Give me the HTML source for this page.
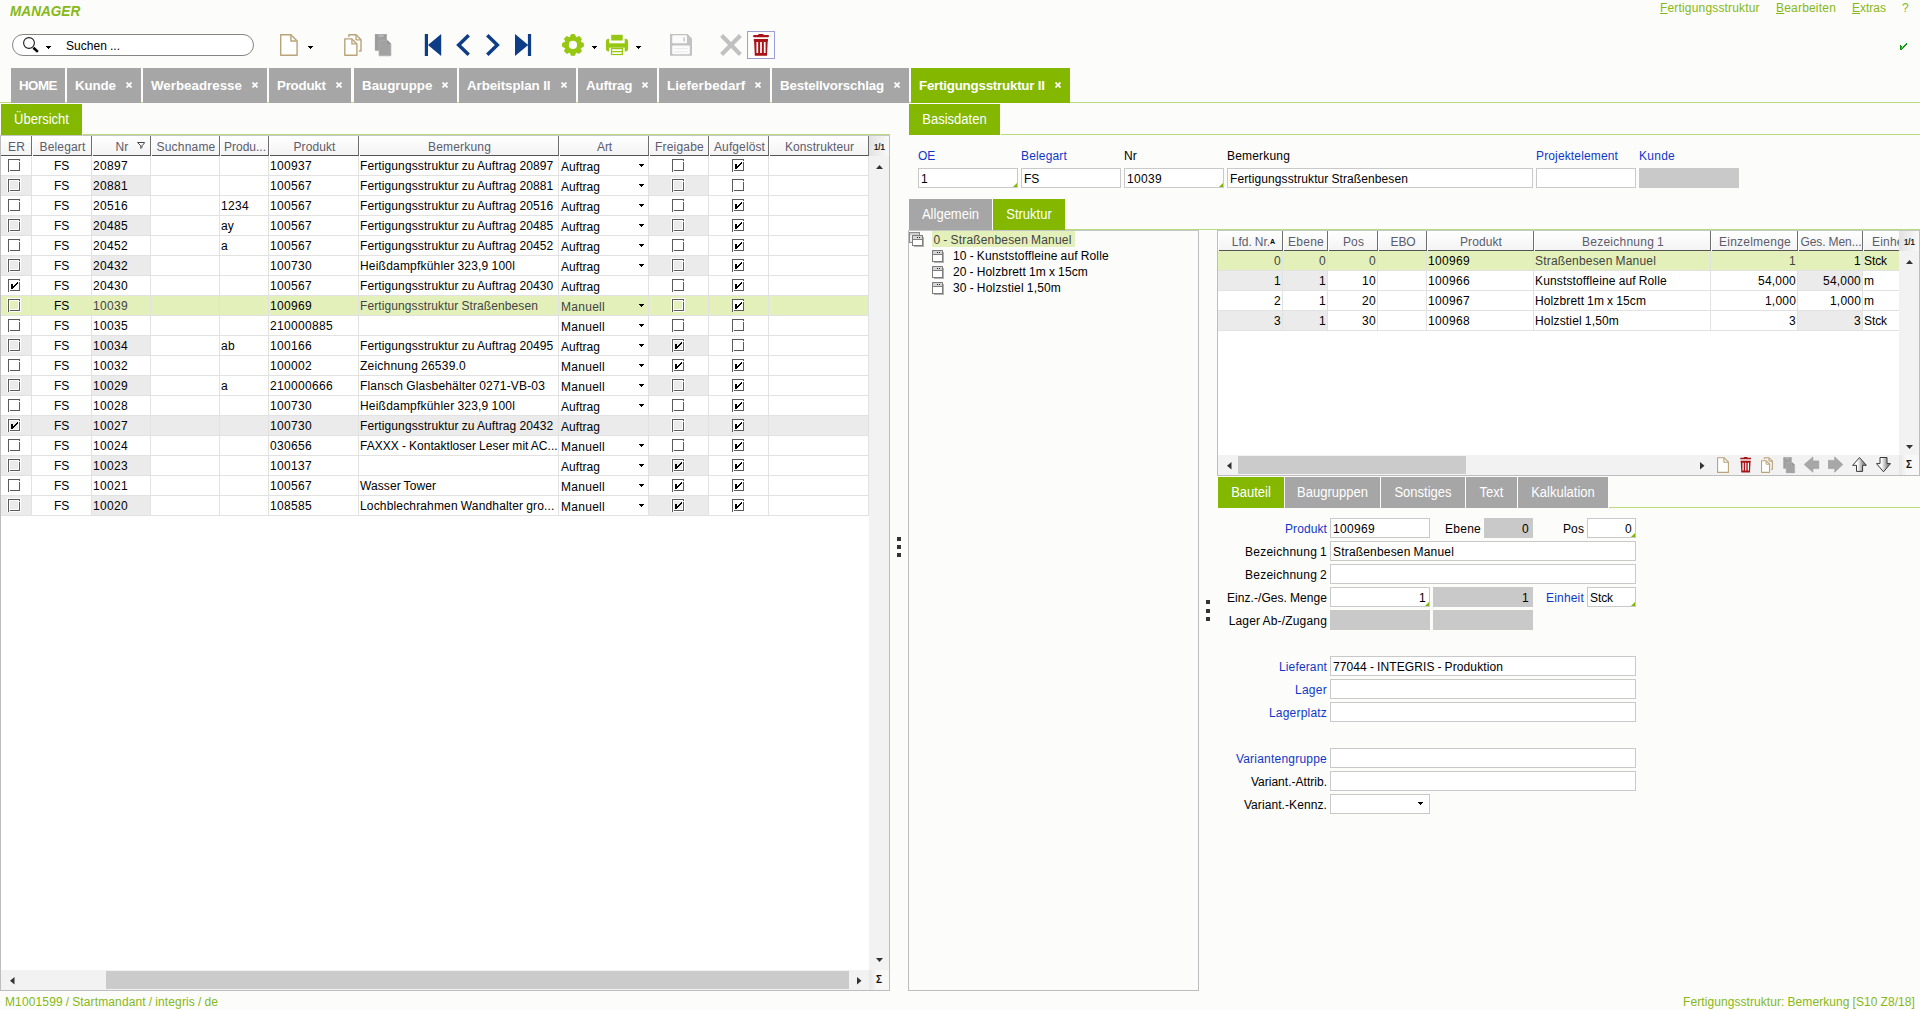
<!DOCTYPE html>
<html lang="de"><head><meta charset="utf-8"><title>MANAGER</title>
<style>
html,body{margin:0;padding:0;}
body{width:1920px;height:1010px;overflow:hidden;position:relative;background:#fcfcfa;
 font-family:"Liberation Sans",sans-serif;font-size:12px;color:#000;}
div,svg.a{position:absolute;box-sizing:border-box;}
.t{white-space:nowrap;line-height:14px;height:14px;}
.h{white-space:nowrap;line-height:14px;color:#5c5c6c;text-align:center;overflow:hidden;
 background:linear-gradient(#ffffff,#f3f3f3);border-right:1px solid #6e6e6e;border-bottom:1px solid #555;padding:4px 0 0 1px;}
.c{white-space:nowrap;line-height:14px;overflow:hidden;padding:3px 0 0 1px;}
.cb{border:1px solid #5a5a5a;}
.ck{position:absolute;left:2px;top:2px;}
.cb:before{content:"";position:absolute;left:-1px;top:11px;width:1px;height:1px;background:#5a5a5a;box-shadow:1px -1px 0 0 var(--f),11px -10px 0 0 var(--f);}
.tab{color:#fff;font-weight:bold;font-size:13.33px;line-height:16px;white-space:nowrap;background:#a6a6a6;
 padding:10px 0 0 8px;}
.tab i{position:absolute;right:9px;top:14px;width:6px;height:6px;}
.st b{display:inline-block;font-weight:normal;transform:scaleY(1.08);transform-origin:50% 78%;}
.st{color:#fff;font-size:13px;line-height:16px;white-space:nowrap;text-align:center;padding-top:8px;}
.in{background:#fff;border:1px solid #c9c9c9;line-height:14px;padding:3px 0 0 2px;white-space:nowrap;overflow:hidden;}
.ro{background:#c9c9c9;line-height:14px;padding:4px 4px 0 0;text-align:right;white-space:nowrap;}
.lb{white-space:nowrap;line-height:14px;height:14px;text-align:right;}
.bl{color:#1038c8;}
.g{color:#86b817;}
.cor:after{content:"";position:absolute;right:0;bottom:0;border-style:solid;border-width:0 0 4px 4px;border-color:transparent transparent #7ab800 transparent;}
</style></head><body>

<div class="t" style="left:10px;top:4px;transform:scaleY(1.1);transform-origin:0 12.5px;font-weight:bold;font-style:italic;font-size:13.6px;line-height:16px;height:16px;color:#86b817;">MANAGER</div>
<div class="t g" style="left:1660px;top:1px;letter-spacing:.17px;"><u>F</u>ertigungsstruktur</div>
<div class="t g" style="left:1776px;top:1px;letter-spacing:0.196px;"><u>B</u>earbeiten</div>
<div class="t g" style="left:1852px;top:1px;"><u>E</u>xtras</div>
<div class="t g" style="left:1902px;top:1px;letter-spacing:0.326px;">?</div>
<svg class="a" style="left:1900px;top:43px" width="7" height="7" viewBox="0 0 7 7" shape-rendering="crispEdges"><path d="M6 0h1v1h-1zM5 1h2v1h-2zM0 2h1v1h-1zM4 2h2v1h-2zM0 3h2v1h-2zM3 3h2v1h-2zM0 4h4v1h-4zM0 5h3v1h-3zM0 6h2v1h-2z" fill="#0b930b"/><path d="M1 4h1v2h-1zM2 4h1v1h-1z" fill="#22d022"/></svg>
<div style="left:12px;top:34px;width:242px;height:22px;border:1px solid #858585;border-radius:11px;background:#fff;"></div>
<svg class="a" style="left:22px;top:36px" width="18" height="18" viewBox="0 0 18 18" ><circle cx="7" cy="7" r="5.400" fill="none" stroke="#1c1c1c" stroke-width="1.1"/><path d="M11.400 11.800 L15.900 15.900" stroke="#000" stroke-width="2.600"/></svg>
<svg class="a" style="left:46px;top:46px" width="5" height="3" viewBox="0 0 5 3" shape-rendering="crispEdges"><path d="M0 0h5v1h-5zM1 1h3v1h-3zM2 2h1v1h-1z" fill="#000"/></svg>
<div class="t" style="left:66px;top:39px;letter-spacing:0.033px;word-spacing:-0.367px;">Suchen ...</div>
<svg class="a" style="left:279px;top:34px" width="20" height="23" viewBox="0 0 20 23" ><path d="M1.700 0.800h10.200l6.200 6.200v14.300h-16.400z" fill="#fff" stroke="#b9a378" stroke-width="1.400" stroke-linejoin="round"/><path d="M11.900 0.800v6.200h6.200" fill="none" stroke="#b9a378" stroke-width="1.400" stroke-linejoin="round"/></svg>
<svg class="a" style="left:308px;top:46px" width="5" height="3" viewBox="0 0 5 3" shape-rendering="crispEdges"><path d="M0 0h5v1h-5zM1 1h3v1h-3zM2 2h1v1h-1z" fill="#000"/></svg>
<svg class="a" style="left:343px;top:34px" width="20" height="23" viewBox="0 0 20 23" ><path d="M5.900 3v-2.200h7.100l5 5v11.200h-2.500" fill="none" stroke="#b9a378" stroke-width="1.400" stroke-linejoin="round"/><path d="M13 0.800v5h5" fill="none" stroke="#b9a378" stroke-width="1.300" stroke-linejoin="round"/><path d="M1.800 4.900h7.100l5 5v11.300h-12.100z" fill="#fff" stroke="#fcfcfa" stroke-width="3.600" stroke-linejoin="round"/><path d="M1.800 4.900h7.100l5 5v11.300h-12.100z" fill="#fff" stroke="#b9a378" stroke-width="1.400" stroke-linejoin="round"/><path d="M8.900 4.900v5h5" fill="none" stroke="#b9a378" stroke-width="1.300" stroke-linejoin="round"/></svg>
<svg class="a" style="left:374px;top:34px" width="18" height="23" viewBox="0 0 18 23" ><rect x="0.900" y="0.100" width="11.900" height="16.600" fill="#9d9d9d"/><rect x="4.300" y="0.300" width="5.400" height="3" rx="0.800" fill="#b4b4b4"/><path d="M5 6.200h8.300l3.600 3.600v12h-11.900z" fill="#a2a2a2" stroke="#b0b0b0" stroke-width="0.700"/><path d="M13.300 6.200v3.600h3.600z" fill="#8f8f8f"/></svg>
<svg class="a" style="left:424px;top:34px" width="18" height="22" viewBox="0 0 18 22" ><path d="M0.800 0h3.200v22h-3.200z M17.200 0v22L4 11z" fill="#0d3d86"/></svg>
<svg class="a" style="left:456px;top:34px" width="15" height="22" viewBox="0 0 15 22" ><path d="M12.700 1.300L2.700 11l10 9.700" fill="none" stroke="#0d3d86" stroke-width="3.500"/></svg>
<svg class="a" style="left:486px;top:34px" width="15" height="22" viewBox="0 0 15 22" ><path d="M1.300 1.300L11.300 11l-10 9.700" fill="none" stroke="#0d3d86" stroke-width="3.500"/></svg>
<svg class="a" style="left:514px;top:34px" width="18" height="22" viewBox="0 0 18 22" ><path d="M13.900 0h3.200v22h-3.200z M1 0v22L14.200 11z" fill="#0d3d86"/></svg>
<svg class="a" style="left:561px;top:33px" width="24" height="24" viewBox="0 0 24 24" ><path d="M10.31 1.58 L13.59 1.58 L14.51 4.06 L15.72 4.55 L18.12 3.46 L20.44 5.78 L19.35 8.18 L19.84 9.39 L22.32 10.31 L22.32 13.59 L19.84 14.51 L19.35 15.72 L20.44 18.12 L18.12 20.44 L15.72 19.35 L14.51 19.84 L13.59 22.32 L10.31 22.32 L9.39 19.84 L8.18 19.35 L5.78 20.44 L3.46 18.12 L4.55 15.72 L4.06 14.51 L1.58 13.59 L1.58 10.31 L4.06 9.39 L4.55 8.18 L3.46 5.78 L5.78 3.46 L8.18 4.55 L9.39 4.06Z" fill="#97c811" stroke="#97c811" stroke-width="1" stroke-linejoin="round"/><circle cx="11.950" cy="11.950" r="4.100" fill="#fcfcfa"/></svg>
<svg class="a" style="left:592px;top:46px" width="5" height="3" viewBox="0 0 5 3" shape-rendering="crispEdges"><path d="M0 0h5v1h-5zM1 1h3v1h-3zM2 2h1v1h-1z" fill="#000"/></svg>
<svg class="a" style="left:605px;top:34px" width="24" height="22" viewBox="0 0 24 22" ><rect x="0.900" y="4.800" width="22.200" height="12.600" rx="3" fill="#97c811"/><rect x="4.200" y="0" width="15.500" height="9.300" fill="#fcfcfa"/><rect x="6.200" y="0.800" width="11.500" height="5.700" fill="#97c811"/><rect x="4.200" y="13.700" width="15.500" height="8" fill="#fcfcfa"/><rect x="6.500" y="14.600" width="10.900" height="5.900" fill="#fcfcfa" stroke="#97c811" stroke-width="1.200"/><rect x="7" y="17" width="10" height="1.200" fill="#97c811"/></svg>
<svg class="a" style="left:636px;top:46px" width="5" height="3" viewBox="0 0 5 3" shape-rendering="crispEdges"><path d="M0 0h5v1h-5zM1 1h3v1h-3zM2 2h1v1h-1z" fill="#000"/></svg>
<svg class="a" style="left:670px;top:34px" width="22" height="22" viewBox="0 0 22 22" ><path d="M0 0h17.600l4.400 4.400v17.400h-22z" fill="#c2c2c2"/><rect x="2.200" y="1.300" width="14.800" height="8" rx="1" fill="#fbfbfb"/><rect x="13.500" y="3.400" width="1.300" height="4" fill="#bdbdbd"/><rect x="2.200" y="11.400" width="17.600" height="8.800" rx="1" fill="#fbfbfb"/><rect x="4.200" y="14" width="13.600" height="1" fill="#ececec"/><rect x="4.200" y="17.300" width="13.600" height="1" fill="#ececec"/></svg>
<svg class="a" style="left:720px;top:34px" width="22" height="22" viewBox="0 0 22 22" ><path d="M1.600 1.600L20.400 20.400M20.400 1.600L1.600 20.400" stroke="#c1c1c1" stroke-width="4.200"/></svg>
<div style="left:747px;top:31px;width:28px;height:28px;border:1px solid #9c9cd6;"></div>
<svg class="a" style="left:753px;top:34px" width="16.0" height="22.0" viewBox="0 0 16 22" ><rect x="5.200" y="0" width="5.400" height="2" rx="0.800" fill="#a81418"/><rect x="0.100" y="1.100" width="15.900" height="2.100" rx="1" fill="#a81418"/><path d="M0.800 5.100h14.200v2.100h-0.300l-0.700 14.600h-12.200l-0.700 -14.600h-0.300z" fill="#a81418"/><path d="M4.300 8v11M8 8v11M11.700 8v11" stroke="#fff" stroke-width="1.700"/></svg>
<div style="left:0px;top:102px;width:1920px;height:1px;background:#b9dc7a;"></div>
<div class="tab" style="left:11px;top:68px;width:54px;height:35px;letter-spacing:-0.55px;">HOME</div>
<div class="tab" style="left:67px;top:68px;width:74px;height:35px;letter-spacing:-0.12px;">Kunde<i><svg width="6" height="6" viewBox="0 0 6 6" style="display:block"><path d="M0.500 0.500L5.500 5.500M5.500 0.500L0.500 5.500" stroke="#fff" stroke-width="1.7"/></svg></i></div>
<div class="tab" style="left:143px;top:68px;width:124px;height:35px;">Werbeadresse<i><svg width="6" height="6" viewBox="0 0 6 6" style="display:block"><path d="M0.500 0.500L5.500 5.500M5.500 0.500L0.500 5.500" stroke="#fff" stroke-width="1.7"/></svg></i></div>
<div class="tab" style="left:269px;top:68px;width:82px;height:35px;letter-spacing:-0.23px;">Produkt<i><svg width="6" height="6" viewBox="0 0 6 6" style="display:block"><path d="M0.500 0.500L5.500 5.500M5.500 0.500L0.500 5.500" stroke="#fff" stroke-width="1.7"/></svg></i></div>
<div class="tab" style="left:354px;top:68px;width:103px;height:35px;">Baugruppe<i><svg width="6" height="6" viewBox="0 0 6 6" style="display:block"><path d="M0.500 0.500L5.500 5.500M5.500 0.500L0.500 5.500" stroke="#fff" stroke-width="1.7"/></svg></i></div>
<div class="tab" style="left:459px;top:68px;width:117px;height:35px;letter-spacing:-0.07px;">Arbeitsplan II<i><svg width="6" height="6" viewBox="0 0 6 6" style="display:block"><path d="M0.500 0.500L5.500 5.500M5.500 0.500L0.500 5.500" stroke="#fff" stroke-width="1.7"/></svg></i></div>
<div class="tab" style="left:578px;top:68px;width:79px;height:35px;letter-spacing:-0.15px;">Auftrag<i><svg width="6" height="6" viewBox="0 0 6 6" style="display:block"><path d="M0.500 0.500L5.500 5.500M5.500 0.500L0.500 5.500" stroke="#fff" stroke-width="1.7"/></svg></i></div>
<div class="tab" style="left:659px;top:68px;width:111px;height:35px;letter-spacing:0.1px;">Lieferbedarf<i><svg width="6" height="6" viewBox="0 0 6 6" style="display:block"><path d="M0.500 0.500L5.500 5.500M5.500 0.500L0.500 5.500" stroke="#fff" stroke-width="1.7"/></svg></i></div>
<div class="tab" style="left:772px;top:68px;width:137px;height:35px;letter-spacing:-0.17px;">Bestellvorschlag<i><svg width="6" height="6" viewBox="0 0 6 6" style="display:block"><path d="M0.500 0.500L5.500 5.500M5.500 0.500L0.500 5.500" stroke="#fff" stroke-width="1.7"/></svg></i></div>
<div class="tab" style="left:911px;top:68px;width:159px;height:35px;background:#84b800;letter-spacing:-0.22px;">Fertigungsstruktur II<i><svg width="6" height="6" viewBox="0 0 6 6" style="display:block"><path d="M0.500 0.500L5.500 5.500M5.500 0.500L0.500 5.500" stroke="#fff" stroke-width="1.7"/></svg></i></div>
<div class="st" style="left:1px;top:104px;width:81px;height:31px;background:#84b800;"><b>Übersicht</b></div>
<div style="left:83px;top:134px;width:807px;height:1px;background:#b9dc7a;"></div>
<div class="st" style="left:909px;top:104px;width:91px;height:31px;background:#84b800;"><b>Basisdaten</b></div>
<div style="left:1001px;top:134px;width:919px;height:1px;background:#b9dc7a;"></div>
<div style="left:0px;top:135px;width:890px;height:856px;border:1px solid #bdbdbd;border-top-color:#c6c6c6;background:#fff;"></div>
<div class="h" style="left:1px;top:136px;width:31px;height:20px;letter-spacing:0.165px;">ER</div>
<div class="h" style="left:33px;top:136px;width:59px;height:20px;letter-spacing:0.163px;">Belegart</div>
<div class="h" style="left:93px;top:136px;width:58px;height:20px;letter-spacing:0.169px;">Nr</div>
<div class="h" style="left:152px;top:136px;width:68px;height:20px;letter-spacing:0.204px;">Suchname</div>
<div class="h" style="left:221px;top:136px;width:48px;height:20px;">Produ...</div>
<div class="h" style="left:270px;top:136px;width:89px;height:20px;letter-spacing:0.092px;">Produkt</div>
<div class="h" style="left:360px;top:136px;width:199px;height:20px;letter-spacing:0.182px;">Bemerkung</div>
<div class="h" style="left:560px;top:136px;width:89px;height:20px;letter-spacing:-0.111px;">Art</div>
<div class="h" style="left:650px;top:136px;width:59px;height:20px;letter-spacing:0.205px;">Freigabe</div>
<div class="h" style="left:710px;top:136px;width:59px;height:20px;letter-spacing:0.107px;">Aufgelöst</div>
<div class="h" style="left:770px;top:136px;width:99px;height:20px;letter-spacing:0.081px;">Konstrukteur</div>
<svg class="a" style="left:137px;top:142px" width="8" height="7" viewBox="0 0 8 7" ><path d="M0.300 0.500h7.400M0.800 0.800l3 3v2.700l1.200 -1.200v-1.500l2.600 -3" fill="none" stroke="#333" stroke-width="0.9"/></svg>
<div style="left:869px;top:136px;width:20px;height:20px;background:linear-gradient(90deg,#e2e2e2,#f9f9f9);"></div>
<div class="t" style="left:874px;top:139.5px;font-size:9.500px;font-weight:bold;color:#222;transform:scaleX(.82);transform-origin:0 0;">1/1</div>
<div style="left:1px;top:175px;width:868px;height:1px;background:#e2e2e2;"></div>
<div class="cb" style="left:8px;top:159px;width:12px;height:12px;background:#fff;--f:#fff;"></div>
<div class="c" style="left:32px;top:156px;width:59px;height:19px;text-align:center;padding-left:0;letter-spacing:-0.167px;">FS</div>
<div class="c" style="left:92px;top:156px;width:58px;height:19px;letter-spacing:0.326px;">20897</div>
<div class="c" style="left:269px;top:156px;width:89px;height:19px;letter-spacing:0.326px;">100937</div>
<div class="c" style="left:359px;top:156px;width:199px;height:19px;letter-spacing:0.111px;word-spacing:-0.445px;">Fertigungsstruktur zu Auftrag 20897</div>
<div class="c" style="left:559px;top:156px;width:89px;height:19px;padding-top:4px;padding-left:2px;letter-spacing:0.044px;">Auftrag</div>
<svg class="a" style="left:639px;top:164px" width="5" height="3" viewBox="0 0 5 3" shape-rendering="crispEdges"><path d="M0 0h5v1h-5zM1 1h3v1h-3zM2 2h1v1h-1z" fill="#000"/></svg>
<div class="cb" style="left:672px;top:159px;width:12px;height:12px;background:#fff;--f:#fff;"></div>
<div class="cb" style="left:732px;top:159px;width:12px;height:12px;background:#fff;--f:#fff;"><svg class="ck" width="7" height="7" viewBox="0 0 7 7" shape-rendering="crispEdges"><path d="M6 0h1v1h-1zM5 1h2v1h-2zM0 2h2v1h-2zM4 2h2v1h-2zM0 3h2v1h-2zM3 3h2v1h-2zM0 4h4v1h-4zM0 5h3v1h-3zM0 6h2v1h-2z" fill="#000"/></svg></div>
<div style="left:1px;top:176px;width:30px;height:19px;background:#ebebeb;"></div>
<div style="left:92px;top:176px;width:58px;height:19px;background:#ebebeb;"></div>
<div style="left:649px;top:176px;width:59px;height:19px;background:#ebebeb;"></div>
<div style="left:1px;top:195px;width:868px;height:1px;background:#e2e2e2;"></div>
<div class="cb" style="left:8px;top:179px;width:12px;height:12px;background:#ebebeb;--f:#ebebeb;box-shadow:0 0 0 1px #fff,inset 0 0 0 1px #fff;"></div>
<div class="c" style="left:32px;top:176px;width:59px;height:19px;text-align:center;padding-left:0;letter-spacing:-0.167px;">FS</div>
<div class="c" style="left:92px;top:176px;width:58px;height:19px;letter-spacing:0.326px;">20881</div>
<div class="c" style="left:269px;top:176px;width:89px;height:19px;letter-spacing:0.326px;">100567</div>
<div class="c" style="left:359px;top:176px;width:199px;height:19px;letter-spacing:0.111px;word-spacing:-0.445px;">Fertigungsstruktur zu Auftrag 20881</div>
<div class="c" style="left:559px;top:176px;width:89px;height:19px;padding-top:4px;padding-left:2px;letter-spacing:0.044px;">Auftrag</div>
<svg class="a" style="left:639px;top:184px" width="5" height="3" viewBox="0 0 5 3" shape-rendering="crispEdges"><path d="M0 0h5v1h-5zM1 1h3v1h-3zM2 2h1v1h-1z" fill="#000"/></svg>
<div class="cb" style="left:672px;top:179px;width:12px;height:12px;background:#ebebeb;--f:#ebebeb;box-shadow:0 0 0 1px #fff,inset 0 0 0 1px #fff;"></div>
<div class="cb" style="left:732px;top:179px;width:12px;height:12px;background:#fff;--f:#fff;"></div>
<div style="left:1px;top:215px;width:868px;height:1px;background:#e2e2e2;"></div>
<div class="cb" style="left:8px;top:199px;width:12px;height:12px;background:#fff;--f:#fff;"></div>
<div class="c" style="left:32px;top:196px;width:59px;height:19px;text-align:center;padding-left:0;letter-spacing:-0.167px;">FS</div>
<div class="c" style="left:92px;top:196px;width:58px;height:19px;letter-spacing:0.326px;">20516</div>
<div class="c" style="left:220px;top:196px;width:48px;height:19px;letter-spacing:0.326px;">1234</div>
<div class="c" style="left:269px;top:196px;width:89px;height:19px;letter-spacing:0.326px;">100567</div>
<div class="c" style="left:359px;top:196px;width:199px;height:19px;letter-spacing:0.111px;word-spacing:-0.445px;">Fertigungsstruktur zu Auftrag 20516</div>
<div class="c" style="left:559px;top:196px;width:89px;height:19px;padding-top:4px;padding-left:2px;letter-spacing:0.044px;">Auftrag</div>
<svg class="a" style="left:639px;top:204px" width="5" height="3" viewBox="0 0 5 3" shape-rendering="crispEdges"><path d="M0 0h5v1h-5zM1 1h3v1h-3zM2 2h1v1h-1z" fill="#000"/></svg>
<div class="cb" style="left:672px;top:199px;width:12px;height:12px;background:#fff;--f:#fff;"></div>
<div class="cb" style="left:732px;top:199px;width:12px;height:12px;background:#fff;--f:#fff;"><svg class="ck" width="7" height="7" viewBox="0 0 7 7" shape-rendering="crispEdges"><path d="M6 0h1v1h-1zM5 1h2v1h-2zM0 2h2v1h-2zM4 2h2v1h-2zM0 3h2v1h-2zM3 3h2v1h-2zM0 4h4v1h-4zM0 5h3v1h-3zM0 6h2v1h-2z" fill="#000"/></svg></div>
<div style="left:1px;top:216px;width:30px;height:19px;background:#ebebeb;"></div>
<div style="left:92px;top:216px;width:58px;height:19px;background:#ebebeb;"></div>
<div style="left:649px;top:216px;width:59px;height:19px;background:#ebebeb;"></div>
<div style="left:1px;top:235px;width:868px;height:1px;background:#e2e2e2;"></div>
<div class="cb" style="left:8px;top:219px;width:12px;height:12px;background:#ebebeb;--f:#ebebeb;box-shadow:0 0 0 1px #fff,inset 0 0 0 1px #fff;"></div>
<div class="c" style="left:32px;top:216px;width:59px;height:19px;text-align:center;padding-left:0;letter-spacing:-0.167px;">FS</div>
<div class="c" style="left:92px;top:216px;width:58px;height:19px;letter-spacing:0.326px;">20485</div>
<div class="c" style="left:220px;top:216px;width:48px;height:19px;letter-spacing:0.163px;">ay</div>
<div class="c" style="left:269px;top:216px;width:89px;height:19px;letter-spacing:0.326px;">100567</div>
<div class="c" style="left:359px;top:216px;width:199px;height:19px;letter-spacing:0.111px;word-spacing:-0.445px;">Fertigungsstruktur zu Auftrag 20485</div>
<div class="c" style="left:559px;top:216px;width:89px;height:19px;padding-top:4px;padding-left:2px;letter-spacing:0.044px;">Auftrag</div>
<svg class="a" style="left:639px;top:224px" width="5" height="3" viewBox="0 0 5 3" shape-rendering="crispEdges"><path d="M0 0h5v1h-5zM1 1h3v1h-3zM2 2h1v1h-1z" fill="#000"/></svg>
<div class="cb" style="left:672px;top:219px;width:12px;height:12px;background:#ebebeb;--f:#ebebeb;box-shadow:0 0 0 1px #fff,inset 0 0 0 1px #fff;"></div>
<div class="cb" style="left:732px;top:219px;width:12px;height:12px;background:#fff;--f:#fff;"><svg class="ck" width="7" height="7" viewBox="0 0 7 7" shape-rendering="crispEdges"><path d="M6 0h1v1h-1zM5 1h2v1h-2zM0 2h2v1h-2zM4 2h2v1h-2zM0 3h2v1h-2zM3 3h2v1h-2zM0 4h4v1h-4zM0 5h3v1h-3zM0 6h2v1h-2z" fill="#000"/></svg></div>
<div style="left:1px;top:255px;width:868px;height:1px;background:#e2e2e2;"></div>
<div class="cb" style="left:8px;top:239px;width:12px;height:12px;background:#fff;--f:#fff;"></div>
<div class="c" style="left:32px;top:236px;width:59px;height:19px;text-align:center;padding-left:0;letter-spacing:-0.167px;">FS</div>
<div class="c" style="left:92px;top:236px;width:58px;height:19px;letter-spacing:0.326px;">20452</div>
<div class="c" style="left:220px;top:236px;width:48px;height:19px;letter-spacing:0.326px;">a</div>
<div class="c" style="left:269px;top:236px;width:89px;height:19px;letter-spacing:0.326px;">100567</div>
<div class="c" style="left:359px;top:236px;width:199px;height:19px;letter-spacing:0.111px;word-spacing:-0.445px;">Fertigungsstruktur zu Auftrag 20452</div>
<div class="c" style="left:559px;top:236px;width:89px;height:19px;padding-top:4px;padding-left:2px;letter-spacing:0.044px;">Auftrag</div>
<svg class="a" style="left:639px;top:244px" width="5" height="3" viewBox="0 0 5 3" shape-rendering="crispEdges"><path d="M0 0h5v1h-5zM1 1h3v1h-3zM2 2h1v1h-1z" fill="#000"/></svg>
<div class="cb" style="left:672px;top:239px;width:12px;height:12px;background:#fff;--f:#fff;"></div>
<div class="cb" style="left:732px;top:239px;width:12px;height:12px;background:#fff;--f:#fff;"><svg class="ck" width="7" height="7" viewBox="0 0 7 7" shape-rendering="crispEdges"><path d="M6 0h1v1h-1zM5 1h2v1h-2zM0 2h2v1h-2zM4 2h2v1h-2zM0 3h2v1h-2zM3 3h2v1h-2zM0 4h4v1h-4zM0 5h3v1h-3zM0 6h2v1h-2z" fill="#000"/></svg></div>
<div style="left:1px;top:256px;width:30px;height:19px;background:#ebebeb;"></div>
<div style="left:92px;top:256px;width:58px;height:19px;background:#ebebeb;"></div>
<div style="left:649px;top:256px;width:59px;height:19px;background:#ebebeb;"></div>
<div style="left:1px;top:275px;width:868px;height:1px;background:#e2e2e2;"></div>
<div class="cb" style="left:8px;top:259px;width:12px;height:12px;background:#ebebeb;--f:#ebebeb;box-shadow:0 0 0 1px #fff,inset 0 0 0 1px #fff;"></div>
<div class="c" style="left:32px;top:256px;width:59px;height:19px;text-align:center;padding-left:0;letter-spacing:-0.167px;">FS</div>
<div class="c" style="left:92px;top:256px;width:58px;height:19px;letter-spacing:0.326px;">20432</div>
<div class="c" style="left:269px;top:256px;width:89px;height:19px;letter-spacing:0.326px;">100730</div>
<div class="c" style="left:359px;top:256px;width:199px;height:19px;letter-spacing:0.205px;word-spacing:-0.539px;">Heißdampfkühler 323,9 100l</div>
<div class="c" style="left:559px;top:256px;width:89px;height:19px;padding-top:4px;padding-left:2px;letter-spacing:0.044px;">Auftrag</div>
<svg class="a" style="left:639px;top:264px" width="5" height="3" viewBox="0 0 5 3" shape-rendering="crispEdges"><path d="M0 0h5v1h-5zM1 1h3v1h-3zM2 2h1v1h-1z" fill="#000"/></svg>
<div class="cb" style="left:672px;top:259px;width:12px;height:12px;background:#ebebeb;--f:#ebebeb;box-shadow:0 0 0 1px #fff,inset 0 0 0 1px #fff;"></div>
<div class="cb" style="left:732px;top:259px;width:12px;height:12px;background:#fff;--f:#fff;"><svg class="ck" width="7" height="7" viewBox="0 0 7 7" shape-rendering="crispEdges"><path d="M6 0h1v1h-1zM5 1h2v1h-2zM0 2h2v1h-2zM4 2h2v1h-2zM0 3h2v1h-2zM3 3h2v1h-2zM0 4h4v1h-4zM0 5h3v1h-3zM0 6h2v1h-2z" fill="#000"/></svg></div>
<div style="left:1px;top:295px;width:868px;height:1px;background:#e2e2e2;"></div>
<div class="cb" style="left:8px;top:279px;width:12px;height:12px;background:#fff;--f:#fff;"><svg class="ck" width="7" height="7" viewBox="0 0 7 7" shape-rendering="crispEdges"><path d="M6 0h1v1h-1zM5 1h2v1h-2zM0 2h2v1h-2zM4 2h2v1h-2zM0 3h2v1h-2zM3 3h2v1h-2zM0 4h4v1h-4zM0 5h3v1h-3zM0 6h2v1h-2z" fill="#000"/></svg></div>
<div class="c" style="left:32px;top:276px;width:59px;height:19px;text-align:center;padding-left:0;letter-spacing:-0.167px;">FS</div>
<div class="c" style="left:92px;top:276px;width:58px;height:19px;letter-spacing:0.326px;">20430</div>
<div class="c" style="left:269px;top:276px;width:89px;height:19px;letter-spacing:0.326px;">100567</div>
<div class="c" style="left:359px;top:276px;width:199px;height:19px;letter-spacing:0.111px;word-spacing:-0.445px;">Fertigungsstruktur zu Auftrag 20430</div>
<div class="c" style="left:559px;top:276px;width:89px;height:19px;padding-top:4px;padding-left:2px;letter-spacing:0.044px;">Auftrag</div>
<div class="cb" style="left:672px;top:279px;width:12px;height:12px;background:#fff;--f:#fff;"></div>
<div class="cb" style="left:732px;top:279px;width:12px;height:12px;background:#fff;--f:#fff;"><svg class="ck" width="7" height="7" viewBox="0 0 7 7" shape-rendering="crispEdges"><path d="M6 0h1v1h-1zM5 1h2v1h-2zM0 2h2v1h-2zM4 2h2v1h-2zM0 3h2v1h-2zM3 3h2v1h-2zM0 4h4v1h-4zM0 5h3v1h-3zM0 6h2v1h-2z" fill="#000"/></svg></div>
<div style="left:1px;top:296px;width:868px;height:19px;background:#e3f0b9;"></div>
<div style="left:1px;top:315px;width:868px;height:1px;background:#e2e2e2;"></div>
<div class="cb" style="left:8px;top:299px;width:12px;height:12px;background:#e3f0b9;--f:#e3f0b9;box-shadow:0 0 0 1px #fff,inset 0 0 0 1px #fff;"></div>
<div class="c" style="left:32px;top:296px;width:59px;height:19px;text-align:center;padding-left:0;letter-spacing:-0.167px;">FS</div>
<div class="c" style="left:92px;top:296px;width:58px;height:19px;color:#444;letter-spacing:0.326px;">10039</div>
<div class="c" style="left:269px;top:296px;width:89px;height:19px;letter-spacing:0.326px;">100969</div>
<div class="c" style="left:359px;top:296px;width:199px;height:19px;color:#444;letter-spacing:0.097px;word-spacing:-0.431px;">Fertigungsstruktur Straßenbesen</div>
<div class="c" style="left:559px;top:296px;width:89px;height:19px;padding-top:4px;padding-left:2px;color:#444;letter-spacing:0.282px;">Manuell</div>
<svg class="a" style="left:639px;top:304px" width="5" height="3" viewBox="0 0 5 3" shape-rendering="crispEdges"><path d="M0 0h5v1h-5zM1 1h3v1h-3zM2 2h1v1h-1z" fill="#000"/></svg>
<div class="cb" style="left:672px;top:299px;width:12px;height:12px;background:#e3f0b9;--f:#e3f0b9;box-shadow:0 0 0 1px #fff,inset 0 0 0 1px #fff;"></div>
<div class="cb" style="left:732px;top:299px;width:12px;height:12px;background:#fff;--f:#fff;"><svg class="ck" width="7" height="7" viewBox="0 0 7 7" shape-rendering="crispEdges"><path d="M6 0h1v1h-1zM5 1h2v1h-2zM0 2h2v1h-2zM4 2h2v1h-2zM0 3h2v1h-2zM3 3h2v1h-2zM0 4h4v1h-4zM0 5h3v1h-3zM0 6h2v1h-2z" fill="#000"/></svg></div>
<div style="left:1px;top:335px;width:868px;height:1px;background:#e2e2e2;"></div>
<div class="cb" style="left:8px;top:319px;width:12px;height:12px;background:#fff;--f:#fff;"></div>
<div class="c" style="left:32px;top:316px;width:59px;height:19px;text-align:center;padding-left:0;letter-spacing:-0.167px;">FS</div>
<div class="c" style="left:92px;top:316px;width:58px;height:19px;letter-spacing:0.326px;">10035</div>
<div class="c" style="left:269px;top:316px;width:89px;height:19px;letter-spacing:0.326px;">210000885</div>
<div class="c" style="left:559px;top:316px;width:89px;height:19px;padding-top:4px;padding-left:2px;letter-spacing:0.282px;">Manuell</div>
<svg class="a" style="left:639px;top:324px" width="5" height="3" viewBox="0 0 5 3" shape-rendering="crispEdges"><path d="M0 0h5v1h-5zM1 1h3v1h-3zM2 2h1v1h-1z" fill="#000"/></svg>
<div class="cb" style="left:672px;top:319px;width:12px;height:12px;background:#fff;--f:#fff;"></div>
<div class="cb" style="left:732px;top:319px;width:12px;height:12px;background:#fff;--f:#fff;"></div>
<div style="left:1px;top:336px;width:30px;height:19px;background:#ebebeb;"></div>
<div style="left:92px;top:336px;width:58px;height:19px;background:#ebebeb;"></div>
<div style="left:649px;top:336px;width:59px;height:19px;background:#ebebeb;"></div>
<div style="left:1px;top:355px;width:868px;height:1px;background:#e2e2e2;"></div>
<div class="cb" style="left:8px;top:339px;width:12px;height:12px;background:#ebebeb;--f:#ebebeb;box-shadow:0 0 0 1px #fff,inset 0 0 0 1px #fff;"></div>
<div class="c" style="left:32px;top:336px;width:59px;height:19px;text-align:center;padding-left:0;letter-spacing:-0.167px;">FS</div>
<div class="c" style="left:92px;top:336px;width:58px;height:19px;letter-spacing:0.326px;">10034</div>
<div class="c" style="left:220px;top:336px;width:48px;height:19px;letter-spacing:0.326px;">ab</div>
<div class="c" style="left:269px;top:336px;width:89px;height:19px;letter-spacing:0.326px;">100166</div>
<div class="c" style="left:359px;top:336px;width:199px;height:19px;letter-spacing:0.111px;word-spacing:-0.445px;">Fertigungsstruktur zu Auftrag 20495</div>
<div class="c" style="left:559px;top:336px;width:89px;height:19px;padding-top:4px;padding-left:2px;letter-spacing:0.044px;">Auftrag</div>
<svg class="a" style="left:639px;top:344px" width="5" height="3" viewBox="0 0 5 3" shape-rendering="crispEdges"><path d="M0 0h5v1h-5zM1 1h3v1h-3zM2 2h1v1h-1z" fill="#000"/></svg>
<div class="cb" style="left:672px;top:339px;width:12px;height:12px;background:#ebebeb;--f:#ebebeb;box-shadow:0 0 0 1px #fff,inset 0 0 0 1px #fff;"><svg class="ck" width="7" height="7" viewBox="0 0 7 7" shape-rendering="crispEdges"><path d="M6 0h1v1h-1zM5 1h2v1h-2zM0 2h2v1h-2zM4 2h2v1h-2zM0 3h2v1h-2zM3 3h2v1h-2zM0 4h4v1h-4zM0 5h3v1h-3zM0 6h2v1h-2z" fill="#000"/></svg></div>
<div class="cb" style="left:732px;top:339px;width:12px;height:12px;background:#fff;--f:#fff;"></div>
<div style="left:1px;top:375px;width:868px;height:1px;background:#e2e2e2;"></div>
<div class="cb" style="left:8px;top:359px;width:12px;height:12px;background:#fff;--f:#fff;"></div>
<div class="c" style="left:32px;top:356px;width:59px;height:19px;text-align:center;padding-left:0;letter-spacing:-0.167px;">FS</div>
<div class="c" style="left:92px;top:356px;width:58px;height:19px;letter-spacing:0.326px;">10032</div>
<div class="c" style="left:269px;top:356px;width:89px;height:19px;letter-spacing:0.326px;">100002</div>
<div class="c" style="left:359px;top:356px;width:199px;height:19px;letter-spacing:0.224px;word-spacing:-0.558px;">Zeichnung 26539.0</div>
<div class="c" style="left:559px;top:356px;width:89px;height:19px;padding-top:4px;padding-left:2px;letter-spacing:0.282px;">Manuell</div>
<svg class="a" style="left:639px;top:364px" width="5" height="3" viewBox="0 0 5 3" shape-rendering="crispEdges"><path d="M0 0h5v1h-5zM1 1h3v1h-3zM2 2h1v1h-1z" fill="#000"/></svg>
<div class="cb" style="left:672px;top:359px;width:12px;height:12px;background:#fff;--f:#fff;"><svg class="ck" width="7" height="7" viewBox="0 0 7 7" shape-rendering="crispEdges"><path d="M6 0h1v1h-1zM5 1h2v1h-2zM0 2h2v1h-2zM4 2h2v1h-2zM0 3h2v1h-2zM3 3h2v1h-2zM0 4h4v1h-4zM0 5h3v1h-3zM0 6h2v1h-2z" fill="#000"/></svg></div>
<div class="cb" style="left:732px;top:359px;width:12px;height:12px;background:#fff;--f:#fff;"><svg class="ck" width="7" height="7" viewBox="0 0 7 7" shape-rendering="crispEdges"><path d="M6 0h1v1h-1zM5 1h2v1h-2zM0 2h2v1h-2zM4 2h2v1h-2zM0 3h2v1h-2zM3 3h2v1h-2zM0 4h4v1h-4zM0 5h3v1h-3zM0 6h2v1h-2z" fill="#000"/></svg></div>
<div style="left:1px;top:376px;width:30px;height:19px;background:#ebebeb;"></div>
<div style="left:92px;top:376px;width:58px;height:19px;background:#ebebeb;"></div>
<div style="left:649px;top:376px;width:59px;height:19px;background:#ebebeb;"></div>
<div style="left:1px;top:395px;width:868px;height:1px;background:#e2e2e2;"></div>
<div class="cb" style="left:8px;top:379px;width:12px;height:12px;background:#ebebeb;--f:#ebebeb;box-shadow:0 0 0 1px #fff,inset 0 0 0 1px #fff;"></div>
<div class="c" style="left:32px;top:376px;width:59px;height:19px;text-align:center;padding-left:0;letter-spacing:-0.167px;">FS</div>
<div class="c" style="left:92px;top:376px;width:58px;height:19px;letter-spacing:0.326px;">10029</div>
<div class="c" style="left:220px;top:376px;width:48px;height:19px;letter-spacing:0.326px;">a</div>
<div class="c" style="left:269px;top:376px;width:89px;height:19px;letter-spacing:0.326px;">210000666</div>
<div class="c" style="left:359px;top:376px;width:199px;height:19px;letter-spacing:0.169px;word-spacing:-0.503px;">Flansch Glasbehälter 0271-VB-03</div>
<div class="c" style="left:559px;top:376px;width:89px;height:19px;padding-top:4px;padding-left:2px;letter-spacing:0.282px;">Manuell</div>
<svg class="a" style="left:639px;top:384px" width="5" height="3" viewBox="0 0 5 3" shape-rendering="crispEdges"><path d="M0 0h5v1h-5zM1 1h3v1h-3zM2 2h1v1h-1z" fill="#000"/></svg>
<div class="cb" style="left:672px;top:379px;width:12px;height:12px;background:#ebebeb;--f:#ebebeb;box-shadow:0 0 0 1px #fff,inset 0 0 0 1px #fff;"></div>
<div class="cb" style="left:732px;top:379px;width:12px;height:12px;background:#fff;--f:#fff;"><svg class="ck" width="7" height="7" viewBox="0 0 7 7" shape-rendering="crispEdges"><path d="M6 0h1v1h-1zM5 1h2v1h-2zM0 2h2v1h-2zM4 2h2v1h-2zM0 3h2v1h-2zM3 3h2v1h-2zM0 4h4v1h-4zM0 5h3v1h-3zM0 6h2v1h-2z" fill="#000"/></svg></div>
<div style="left:1px;top:415px;width:868px;height:1px;background:#e2e2e2;"></div>
<div class="cb" style="left:8px;top:399px;width:12px;height:12px;background:#fff;--f:#fff;"></div>
<div class="c" style="left:32px;top:396px;width:59px;height:19px;text-align:center;padding-left:0;letter-spacing:-0.167px;">FS</div>
<div class="c" style="left:92px;top:396px;width:58px;height:19px;letter-spacing:0.326px;">10028</div>
<div class="c" style="left:269px;top:396px;width:89px;height:19px;letter-spacing:0.326px;">100730</div>
<div class="c" style="left:359px;top:396px;width:199px;height:19px;letter-spacing:0.205px;word-spacing:-0.539px;">Heißdampfkühler 323,9 100l</div>
<div class="c" style="left:559px;top:396px;width:89px;height:19px;padding-top:4px;padding-left:2px;letter-spacing:0.044px;">Auftrag</div>
<svg class="a" style="left:639px;top:404px" width="5" height="3" viewBox="0 0 5 3" shape-rendering="crispEdges"><path d="M0 0h5v1h-5zM1 1h3v1h-3zM2 2h1v1h-1z" fill="#000"/></svg>
<div class="cb" style="left:672px;top:399px;width:12px;height:12px;background:#fff;--f:#fff;"></div>
<div class="cb" style="left:732px;top:399px;width:12px;height:12px;background:#fff;--f:#fff;"><svg class="ck" width="7" height="7" viewBox="0 0 7 7" shape-rendering="crispEdges"><path d="M6 0h1v1h-1zM5 1h2v1h-2zM0 2h2v1h-2zM4 2h2v1h-2zM0 3h2v1h-2zM3 3h2v1h-2zM0 4h4v1h-4zM0 5h3v1h-3zM0 6h2v1h-2z" fill="#000"/></svg></div>
<div style="left:1px;top:416px;width:868px;height:19px;background:#ebebeb;"></div>
<div style="left:1px;top:435px;width:868px;height:1px;background:#e2e2e2;"></div>
<div class="cb" style="left:8px;top:419px;width:12px;height:12px;background:#ebebeb;--f:#ebebeb;box-shadow:0 0 0 1px #fff,inset 0 0 0 1px #fff;"><svg class="ck" width="7" height="7" viewBox="0 0 7 7" shape-rendering="crispEdges"><path d="M6 0h1v1h-1zM5 1h2v1h-2zM0 2h2v1h-2zM4 2h2v1h-2zM0 3h2v1h-2zM3 3h2v1h-2zM0 4h4v1h-4zM0 5h3v1h-3zM0 6h2v1h-2z" fill="#000"/></svg></div>
<div class="c" style="left:32px;top:416px;width:59px;height:19px;text-align:center;padding-left:0;letter-spacing:-0.167px;">FS</div>
<div class="c" style="left:92px;top:416px;width:58px;height:19px;letter-spacing:0.326px;">10027</div>
<div class="c" style="left:269px;top:416px;width:89px;height:19px;letter-spacing:0.326px;">100730</div>
<div class="c" style="left:359px;top:416px;width:199px;height:19px;letter-spacing:0.111px;word-spacing:-0.445px;">Fertigungsstruktur zu Auftrag 20432</div>
<div class="c" style="left:559px;top:416px;width:89px;height:19px;padding-top:4px;padding-left:2px;letter-spacing:0.044px;">Auftrag</div>
<div class="cb" style="left:672px;top:419px;width:12px;height:12px;background:#ebebeb;--f:#ebebeb;box-shadow:0 0 0 1px #fff,inset 0 0 0 1px #fff;"></div>
<div class="cb" style="left:732px;top:419px;width:12px;height:12px;background:#fff;--f:#fff;"><svg class="ck" width="7" height="7" viewBox="0 0 7 7" shape-rendering="crispEdges"><path d="M6 0h1v1h-1zM5 1h2v1h-2zM0 2h2v1h-2zM4 2h2v1h-2zM0 3h2v1h-2zM3 3h2v1h-2zM0 4h4v1h-4zM0 5h3v1h-3zM0 6h2v1h-2z" fill="#000"/></svg></div>
<div style="left:1px;top:455px;width:868px;height:1px;background:#e2e2e2;"></div>
<div class="cb" style="left:8px;top:439px;width:12px;height:12px;background:#fff;--f:#fff;"></div>
<div class="c" style="left:32px;top:436px;width:59px;height:19px;text-align:center;padding-left:0;letter-spacing:-0.167px;">FS</div>
<div class="c" style="left:92px;top:436px;width:58px;height:19px;letter-spacing:0.326px;">10024</div>
<div class="c" style="left:269px;top:436px;width:89px;height:19px;letter-spacing:0.326px;">030656</div>
<div class="c" style="left:359px;top:436px;width:199px;height:19px;letter-spacing:0.041px;word-spacing:-0.375px;">FAXXX - Kontaktloser Leser mit AC...</div>
<div class="c" style="left:559px;top:436px;width:89px;height:19px;padding-top:4px;padding-left:2px;letter-spacing:0.282px;">Manuell</div>
<svg class="a" style="left:639px;top:444px" width="5" height="3" viewBox="0 0 5 3" shape-rendering="crispEdges"><path d="M0 0h5v1h-5zM1 1h3v1h-3zM2 2h1v1h-1z" fill="#000"/></svg>
<div class="cb" style="left:672px;top:439px;width:12px;height:12px;background:#fff;--f:#fff;"></div>
<div class="cb" style="left:732px;top:439px;width:12px;height:12px;background:#fff;--f:#fff;"><svg class="ck" width="7" height="7" viewBox="0 0 7 7" shape-rendering="crispEdges"><path d="M6 0h1v1h-1zM5 1h2v1h-2zM0 2h2v1h-2zM4 2h2v1h-2zM0 3h2v1h-2zM3 3h2v1h-2zM0 4h4v1h-4zM0 5h3v1h-3zM0 6h2v1h-2z" fill="#000"/></svg></div>
<div style="left:1px;top:456px;width:30px;height:19px;background:#ebebeb;"></div>
<div style="left:92px;top:456px;width:58px;height:19px;background:#ebebeb;"></div>
<div style="left:649px;top:456px;width:59px;height:19px;background:#ebebeb;"></div>
<div style="left:1px;top:475px;width:868px;height:1px;background:#e2e2e2;"></div>
<div class="cb" style="left:8px;top:459px;width:12px;height:12px;background:#ebebeb;--f:#ebebeb;box-shadow:0 0 0 1px #fff,inset 0 0 0 1px #fff;"></div>
<div class="c" style="left:32px;top:456px;width:59px;height:19px;text-align:center;padding-left:0;letter-spacing:-0.167px;">FS</div>
<div class="c" style="left:92px;top:456px;width:58px;height:19px;letter-spacing:0.326px;">10023</div>
<div class="c" style="left:269px;top:456px;width:89px;height:19px;letter-spacing:0.326px;">100137</div>
<div class="c" style="left:559px;top:456px;width:89px;height:19px;padding-top:4px;padding-left:2px;letter-spacing:0.044px;">Auftrag</div>
<svg class="a" style="left:639px;top:464px" width="5" height="3" viewBox="0 0 5 3" shape-rendering="crispEdges"><path d="M0 0h5v1h-5zM1 1h3v1h-3zM2 2h1v1h-1z" fill="#000"/></svg>
<div class="cb" style="left:672px;top:459px;width:12px;height:12px;background:#ebebeb;--f:#ebebeb;box-shadow:0 0 0 1px #fff,inset 0 0 0 1px #fff;"><svg class="ck" width="7" height="7" viewBox="0 0 7 7" shape-rendering="crispEdges"><path d="M6 0h1v1h-1zM5 1h2v1h-2zM0 2h2v1h-2zM4 2h2v1h-2zM0 3h2v1h-2zM3 3h2v1h-2zM0 4h4v1h-4zM0 5h3v1h-3zM0 6h2v1h-2z" fill="#000"/></svg></div>
<div class="cb" style="left:732px;top:459px;width:12px;height:12px;background:#fff;--f:#fff;"><svg class="ck" width="7" height="7" viewBox="0 0 7 7" shape-rendering="crispEdges"><path d="M6 0h1v1h-1zM5 1h2v1h-2zM0 2h2v1h-2zM4 2h2v1h-2zM0 3h2v1h-2zM3 3h2v1h-2zM0 4h4v1h-4zM0 5h3v1h-3zM0 6h2v1h-2z" fill="#000"/></svg></div>
<div style="left:1px;top:495px;width:868px;height:1px;background:#e2e2e2;"></div>
<div class="cb" style="left:8px;top:479px;width:12px;height:12px;background:#fff;--f:#fff;"></div>
<div class="c" style="left:32px;top:476px;width:59px;height:19px;text-align:center;padding-left:0;letter-spacing:-0.167px;">FS</div>
<div class="c" style="left:92px;top:476px;width:58px;height:19px;letter-spacing:0.326px;">10021</div>
<div class="c" style="left:269px;top:476px;width:89px;height:19px;letter-spacing:0.326px;">100567</div>
<div class="c" style="left:359px;top:476px;width:199px;height:19px;letter-spacing:0.090px;word-spacing:-0.424px;">Wasser Tower</div>
<div class="c" style="left:559px;top:476px;width:89px;height:19px;padding-top:4px;padding-left:2px;letter-spacing:0.282px;">Manuell</div>
<svg class="a" style="left:639px;top:484px" width="5" height="3" viewBox="0 0 5 3" shape-rendering="crispEdges"><path d="M0 0h5v1h-5zM1 1h3v1h-3zM2 2h1v1h-1z" fill="#000"/></svg>
<div class="cb" style="left:672px;top:479px;width:12px;height:12px;background:#fff;--f:#fff;"><svg class="ck" width="7" height="7" viewBox="0 0 7 7" shape-rendering="crispEdges"><path d="M6 0h1v1h-1zM5 1h2v1h-2zM0 2h2v1h-2zM4 2h2v1h-2zM0 3h2v1h-2zM3 3h2v1h-2zM0 4h4v1h-4zM0 5h3v1h-3zM0 6h2v1h-2z" fill="#000"/></svg></div>
<div class="cb" style="left:732px;top:479px;width:12px;height:12px;background:#fff;--f:#fff;"><svg class="ck" width="7" height="7" viewBox="0 0 7 7" shape-rendering="crispEdges"><path d="M6 0h1v1h-1zM5 1h2v1h-2zM0 2h2v1h-2zM4 2h2v1h-2zM0 3h2v1h-2zM3 3h2v1h-2zM0 4h4v1h-4zM0 5h3v1h-3zM0 6h2v1h-2z" fill="#000"/></svg></div>
<div style="left:1px;top:496px;width:30px;height:19px;background:#ebebeb;"></div>
<div style="left:92px;top:496px;width:58px;height:19px;background:#ebebeb;"></div>
<div style="left:649px;top:496px;width:59px;height:19px;background:#ebebeb;"></div>
<div style="left:1px;top:515px;width:868px;height:1px;background:#e2e2e2;"></div>
<div class="cb" style="left:8px;top:499px;width:12px;height:12px;background:#ebebeb;--f:#ebebeb;box-shadow:0 0 0 1px #fff,inset 0 0 0 1px #fff;"></div>
<div class="c" style="left:32px;top:496px;width:59px;height:19px;text-align:center;padding-left:0;letter-spacing:-0.167px;">FS</div>
<div class="c" style="left:92px;top:496px;width:58px;height:19px;letter-spacing:0.326px;">10020</div>
<div class="c" style="left:269px;top:496px;width:89px;height:19px;letter-spacing:0.326px;">108585</div>
<div class="c" style="left:359px;top:496px;width:199px;height:19px;letter-spacing:0.158px;word-spacing:-0.492px;">Lochblechrahmen Wandhalter gro...</div>
<div class="c" style="left:559px;top:496px;width:89px;height:19px;padding-top:4px;padding-left:2px;letter-spacing:0.282px;">Manuell</div>
<svg class="a" style="left:639px;top:504px" width="5" height="3" viewBox="0 0 5 3" shape-rendering="crispEdges"><path d="M0 0h5v1h-5zM1 1h3v1h-3zM2 2h1v1h-1z" fill="#000"/></svg>
<div class="cb" style="left:672px;top:499px;width:12px;height:12px;background:#ebebeb;--f:#ebebeb;box-shadow:0 0 0 1px #fff,inset 0 0 0 1px #fff;"><svg class="ck" width="7" height="7" viewBox="0 0 7 7" shape-rendering="crispEdges"><path d="M6 0h1v1h-1zM5 1h2v1h-2zM0 2h2v1h-2zM4 2h2v1h-2zM0 3h2v1h-2zM3 3h2v1h-2zM0 4h4v1h-4zM0 5h3v1h-3zM0 6h2v1h-2z" fill="#000"/></svg></div>
<div class="cb" style="left:732px;top:499px;width:12px;height:12px;background:#fff;--f:#fff;"><svg class="ck" width="7" height="7" viewBox="0 0 7 7" shape-rendering="crispEdges"><path d="M6 0h1v1h-1zM5 1h2v1h-2zM0 2h2v1h-2zM4 2h2v1h-2zM0 3h2v1h-2zM3 3h2v1h-2zM0 4h4v1h-4zM0 5h3v1h-3zM0 6h2v1h-2z" fill="#000"/></svg></div>
<div style="left:31px;top:156px;width:1px;height:360px;background:#e2e2e2;"></div>
<div style="left:91px;top:156px;width:1px;height:360px;background:#e2e2e2;"></div>
<div style="left:150px;top:156px;width:1px;height:360px;background:#e2e2e2;"></div>
<div style="left:219px;top:156px;width:1px;height:360px;background:#e2e2e2;"></div>
<div style="left:268px;top:156px;width:1px;height:360px;background:#e2e2e2;"></div>
<div style="left:358px;top:156px;width:1px;height:360px;background:#e2e2e2;"></div>
<div style="left:558px;top:156px;width:1px;height:360px;background:#e2e2e2;"></div>
<div style="left:648px;top:156px;width:1px;height:360px;background:#e2e2e2;"></div>
<div style="left:708px;top:156px;width:1px;height:360px;background:#e2e2e2;"></div>
<div style="left:768px;top:156px;width:1px;height:360px;background:#e2e2e2;"></div>
<div style="left:868px;top:156px;width:1px;height:360px;background:#e2e2e2;"></div>
<div style="left:869px;top:156px;width:20px;height:815px;background:#f2f2f2;"></div>
<svg class="a" style="left:876px;top:165px" width="7" height="4" viewBox="0 0 7 4" ><path d="M0 4L3.500 0L7 4z" fill="#333"/></svg>
<svg class="a" style="left:876px;top:958px" width="7" height="4" viewBox="0 0 7 4" ><path d="M0 0L3.500 4L7 0z" fill="#333"/></svg>
<div style="left:1px;top:970px;width:868px;height:20px;background:#f2f2f2;"></div>
<div style="left:106px;top:971px;width:743px;height:18px;background:#cbcbcb;"></div>
<svg class="a" style="left:9.7px;top:976.5px" width="5" height="8" viewBox="0 0 5 8" ><path d="M4.500 0L0 3.750L4.500 7.500z" fill="#333"/></svg>
<svg class="a" style="left:857.3px;top:976.5px" width="5" height="8" viewBox="0 0 5 8" ><path d="M0 0L4.500 3.750L0 7.500z" fill="#333"/></svg>
<div style="left:869px;top:970px;width:20px;height:20px;background:linear-gradient(90deg,#e6e6e6,#f8f8f8 40%);"></div>
<div class="t" style="left:876px;top:973px;font-size:10px;font-weight:bold;color:#111;">Σ</div>
<div style="left:897px;top:537px;width:4px;height:4px;background:#333;"></div>
<div style="left:897px;top:545px;width:4px;height:4px;background:#333;"></div>
<div style="left:897px;top:553px;width:4px;height:4px;background:#333;"></div>
<div class="t bl" style="left:918px;top:149px;letter-spacing:-0.169px;">OE</div>
<div class="t bl" style="left:1021px;top:149px;letter-spacing:0.163px;">Belegart</div>
<div class="t" style="left:1124px;top:149px;letter-spacing:0.169px;">Nr</div>
<div class="t" style="left:1227px;top:149px;letter-spacing:0.182px;">Bemerkung</div>
<div class="t bl" style="left:1536px;top:149px;letter-spacing:0.140px;">Projektelement</div>
<div class="t bl" style="left:1639px;top:149px;letter-spacing:0.260px;">Kunde</div>
<div class="in cor" style="left:918px;top:168px;width:100px;height:20px;letter-spacing:0.326px;">1</div>
<div class="in" style="left:1021px;top:168px;width:100px;height:20px;letter-spacing:-0.167px;">FS</div>
<div class="in cor" style="left:1124px;top:168px;width:100px;height:20px;letter-spacing:0.326px;">10039</div>
<div class="in" style="left:1227px;top:168px;width:306px;height:20px;letter-spacing:0.097px;word-spacing:-0.431px;">Fertigungsstruktur Straßenbesen</div>
<div class="in" style="left:1536px;top:168px;width:100px;height:20px;"></div>
<div class="ro" style="left:1639px;top:168px;width:100px;height:20px;"></div>
<div class="st" style="left:909px;top:199px;width:83px;height:31px;background:#a6a6a6;"><b>Allgemein</b></div>
<div class="st" style="left:993px;top:199px;width:72px;height:31px;background:#84b800;"><b>Struktur</b></div>
<div style="left:1065px;top:229px;width:855px;height:1px;background:#b9dc7a;"></div>
<div style="left:908px;top:230px;width:291px;height:761px;border:1px solid #bdbdbd;border-top-color:#c6c6c6;"></div>
<svg class="a" style="left:909px;top:232px" width="15" height="15" viewBox="0 0 15 15" shape-rendering="crispEdges"><rect x="0.500" y="0.500" width="10" height="10" fill="#eee" stroke="#8a8a8a"/><rect x="1" y="1" width="9" height="2" fill="#d0d0d0"/><rect x="4.500" y="4.500" width="10" height="10" fill="#b0b0b0"/><rect x="3.500" y="3.500" width="10" height="10" fill="#fff" stroke="#7d7d7d"/><rect x="4" y="4" width="9" height="3" fill="#d6d6d6"/><rect x="4" y="7" width="9" height="1" fill="#7d7d7d"/><rect x="8" y="5" width="1" height="1" fill="#222"/><rect x="10" y="5" width="1" height="1" fill="#222"/></svg>
<div style="left:932px;top:231px;width:143px;height:16px;background:#e3f0b9;"></div>
<div class="t" style="left:933.5px;top:233px;color:#444;letter-spacing:0.180px;word-spacing:-0.514px;">0 - Straßenbesen Manuel</div>
<svg class="a" style="left:932px;top:250px" width="12" height="13" viewBox="0 0 12 13" shape-rendering="crispEdges"><rect x="1.500" y="1.500" width="10" height="11" fill="#b0b0b0"/><rect x="0.500" y="0.500" width="10" height="11" fill="#fff" stroke="#7d7d7d"/><rect x="1" y="1" width="9" height="3" fill="#d6d6d6"/><rect x="1" y="4" width="9" height="1" fill="#7d7d7d"/><rect x="5" y="2" width="1" height="1" fill="#222"/><rect x="7" y="2" width="1" height="1" fill="#222"/></svg>
<div class="t" style="left:953px;top:249px;letter-spacing:0.151px;word-spacing:-0.485px;">10 - Kunststoffleine auf Rolle</div>
<svg class="a" style="left:932px;top:266px" width="12" height="13" viewBox="0 0 12 13" shape-rendering="crispEdges"><rect x="1.500" y="1.500" width="10" height="11" fill="#b0b0b0"/><rect x="0.500" y="0.500" width="10" height="11" fill="#fff" stroke="#7d7d7d"/><rect x="1" y="1" width="9" height="3" fill="#d6d6d6"/><rect x="1" y="4" width="9" height="1" fill="#7d7d7d"/><rect x="5" y="2" width="1" height="1" fill="#222"/><rect x="7" y="2" width="1" height="1" fill="#222"/></svg>
<div class="t" style="left:953px;top:265px;letter-spacing:0.138px;word-spacing:-0.472px;">20 - Holzbrett 1m x 15cm</div>
<svg class="a" style="left:932px;top:282px" width="12" height="13" viewBox="0 0 12 13" shape-rendering="crispEdges"><rect x="1.500" y="1.500" width="10" height="11" fill="#b0b0b0"/><rect x="0.500" y="0.500" width="10" height="11" fill="#fff" stroke="#7d7d7d"/><rect x="1" y="1" width="9" height="3" fill="#d6d6d6"/><rect x="1" y="4" width="9" height="1" fill="#7d7d7d"/><rect x="5" y="2" width="1" height="1" fill="#222"/><rect x="7" y="2" width="1" height="1" fill="#222"/></svg>
<div class="t" style="left:953px;top:281px;letter-spacing:0.174px;word-spacing:-0.508px;">30 - Holzstiel 1,50m</div>
<div style="left:1206px;top:600px;width:4px;height:4px;background:#333;"></div>
<div style="left:1206px;top:609px;width:4px;height:4px;background:#333;"></div>
<div style="left:1206px;top:617px;width:4px;height:4px;background:#333;"></div>
<div style="left:1217px;top:230px;width:703px;height:246px;border:1px solid #bdbdbd;border-top-color:#c6c6c6;background:#fff;"></div>
<div class="h" style="left:1219px;top:231px;width:64px;height:20px;word-spacing:-0.332px;">Lfd. Nr.</div>
<div class="h" style="left:1284px;top:231px;width:44px;height:20px;letter-spacing:0.260px;">Ebene</div>
<div class="h" style="left:1329px;top:231px;width:49px;height:20px;letter-spacing:0.107px;">Pos</div>
<div class="h" style="left:1379px;top:231px;width:48px;height:20px;letter-spacing:-0.114px;">EBO</div>
<div class="h" style="left:1428px;top:231px;width:106px;height:20px;letter-spacing:0.092px;">Produkt</div>
<div class="h" style="left:1535px;top:231px;width:176px;height:20px;letter-spacing:0.245px;word-spacing:-0.579px;">Bezeichnung 1</div>
<div class="h" style="left:1712px;top:231px;width:86px;height:20px;letter-spacing:0.239px;">Einzelmenge</div>
<div class="h" style="left:1799px;top:231px;width:64px;height:20px;letter-spacing:-0.069px;word-spacing:-0.265px;">Ges. Men...</div>
<div class="h" style="left:1864px;top:231px;width:35px;height:20px;border-right:none;text-align:left;padding-left:8px;letter-spacing:0.187px;">Einheit</div>
<div style="left:1899px;top:231px;width:20px;height:20px;background:linear-gradient(90deg,#e2e2e2,#f9f9f9);"></div>
<div class="t" style="left:1904px;top:234.5px;font-size:9.500px;font-weight:bold;color:#222;transform:scaleX(.82);transform-origin:0 0;">1/1</div>
<div class="t" style="left:1270px;top:235px;font-size:7px;font-weight:bold;font-family:"Liberation Serif",serif;color:#333;">A</div>
<div style="left:1218px;top:251px;width:681px;height:19px;background:#e3f0b9;"></div>
<div style="left:1218px;top:270px;width:681px;height:1px;background:#e2e2e2;"></div>
<div class="c" style="left:1218px;top:251px;width:64px;height:19px;text-align:right;padding:3px 1px 0 0;color:#444;letter-spacing:0.326px;">0</div>
<div class="c" style="left:1283px;top:251px;width:44px;height:19px;text-align:right;padding:3px 1px 0 0;color:#444;letter-spacing:0.326px;">0</div>
<div class="c" style="left:1328px;top:251px;width:49px;height:19px;text-align:right;padding:3px 1px 0 0;color:#444;letter-spacing:0.326px;">0</div>
<div class="c" style="left:1427px;top:251px;width:106px;height:19px;letter-spacing:0.326px;">100969</div>
<div class="c" style="left:1534px;top:251px;width:176px;height:19px;color:#444;letter-spacing:0.181px;word-spacing:-0.515px;">Straßenbesen Manuel</div>
<div class="c" style="left:1711px;top:251px;width:86px;height:19px;text-align:right;padding:3px 1px 0 0;color:#444;letter-spacing:0.326px;">1</div>
<div class="c" style="left:1798px;top:251px;width:64px;height:19px;text-align:right;padding:3px 1px 0 0;letter-spacing:0.326px;">1</div>
<div class="c" style="left:1863px;top:251px;width:36px;height:19px;letter-spacing:-0.084px;">Stck</div>
<div style="left:1218px;top:271px;width:109px;height:19px;background:#ebebeb;"></div>
<div style="left:1798px;top:271px;width:64px;height:19px;background:#ebebeb;"></div>
<div style="left:1218px;top:290px;width:681px;height:1px;background:#e2e2e2;"></div>
<div class="c" style="left:1218px;top:271px;width:64px;height:19px;text-align:right;padding:3px 1px 0 0;letter-spacing:0.326px;">1</div>
<div class="c" style="left:1283px;top:271px;width:44px;height:19px;text-align:right;padding:3px 1px 0 0;letter-spacing:0.326px;">1</div>
<div class="c" style="left:1328px;top:271px;width:49px;height:19px;text-align:right;padding:3px 1px 0 0;letter-spacing:0.326px;">10</div>
<div class="c" style="left:1427px;top:271px;width:106px;height:19px;letter-spacing:0.326px;">100966</div>
<div class="c" style="left:1534px;top:271px;width:176px;height:19px;letter-spacing:0.142px;word-spacing:-0.476px;">Kunststoffleine auf Rolle</div>
<div class="c" style="left:1711px;top:271px;width:86px;height:19px;text-align:right;padding:3px 1px 0 0;letter-spacing:0.216px;">54,000</div>
<div class="c" style="left:1798px;top:271px;width:64px;height:19px;text-align:right;padding:3px 1px 0 0;letter-spacing:0.216px;">54,000</div>
<div class="c" style="left:1863px;top:271px;width:36px;height:19px;">m</div>
<div style="left:1218px;top:310px;width:681px;height:1px;background:#e2e2e2;"></div>
<div class="c" style="left:1218px;top:291px;width:64px;height:19px;text-align:right;padding:3px 1px 0 0;letter-spacing:0.326px;">2</div>
<div class="c" style="left:1283px;top:291px;width:44px;height:19px;text-align:right;padding:3px 1px 0 0;letter-spacing:0.326px;">1</div>
<div class="c" style="left:1328px;top:291px;width:49px;height:19px;text-align:right;padding:3px 1px 0 0;letter-spacing:0.326px;">20</div>
<div class="c" style="left:1427px;top:291px;width:106px;height:19px;letter-spacing:0.326px;">100967</div>
<div class="c" style="left:1534px;top:291px;width:176px;height:19px;letter-spacing:0.123px;word-spacing:-0.457px;">Holzbrett 1m x 15cm</div>
<div class="c" style="left:1711px;top:291px;width:86px;height:19px;text-align:right;padding:3px 1px 0 0;letter-spacing:0.194px;">1,000</div>
<div class="c" style="left:1798px;top:291px;width:64px;height:19px;text-align:right;padding:3px 1px 0 0;letter-spacing:0.194px;">1,000</div>
<div class="c" style="left:1863px;top:291px;width:36px;height:19px;">m</div>
<div style="left:1218px;top:311px;width:109px;height:19px;background:#ebebeb;"></div>
<div style="left:1798px;top:311px;width:64px;height:19px;background:#ebebeb;"></div>
<div style="left:1218px;top:330px;width:681px;height:1px;background:#e2e2e2;"></div>
<div class="c" style="left:1218px;top:311px;width:64px;height:19px;text-align:right;padding:3px 1px 0 0;letter-spacing:0.326px;">3</div>
<div class="c" style="left:1283px;top:311px;width:44px;height:19px;text-align:right;padding:3px 1px 0 0;letter-spacing:0.326px;">1</div>
<div class="c" style="left:1328px;top:311px;width:49px;height:19px;text-align:right;padding:3px 1px 0 0;letter-spacing:0.326px;">30</div>
<div class="c" style="left:1427px;top:311px;width:106px;height:19px;letter-spacing:0.326px;">100968</div>
<div class="c" style="left:1534px;top:311px;width:176px;height:19px;letter-spacing:0.164px;word-spacing:-0.498px;">Holzstiel 1,50m</div>
<div class="c" style="left:1711px;top:311px;width:86px;height:19px;text-align:right;padding:3px 1px 0 0;letter-spacing:0.326px;">3</div>
<div class="c" style="left:1798px;top:311px;width:64px;height:19px;text-align:right;padding:3px 1px 0 0;letter-spacing:0.326px;">3</div>
<div class="c" style="left:1863px;top:311px;width:36px;height:19px;letter-spacing:-0.084px;">Stck</div>
<div style="left:1282px;top:251px;width:1px;height:80px;background:#e2e2e2;"></div>
<div style="left:1327px;top:251px;width:1px;height:80px;background:#e2e2e2;"></div>
<div style="left:1377px;top:251px;width:1px;height:80px;background:#e2e2e2;"></div>
<div style="left:1426px;top:251px;width:1px;height:80px;background:#e2e2e2;"></div>
<div style="left:1533px;top:251px;width:1px;height:80px;background:#e2e2e2;"></div>
<div style="left:1710px;top:251px;width:1px;height:80px;background:#e2e2e2;"></div>
<div style="left:1797px;top:251px;width:1px;height:80px;background:#e2e2e2;"></div>
<div style="left:1862px;top:251px;width:1px;height:80px;background:#e2e2e2;"></div>
<div style="left:1899px;top:251px;width:20px;height:204px;background:#f2f2f2;"></div>
<svg class="a" style="left:1906px;top:260px" width="7" height="4" viewBox="0 0 7 4" ><path d="M0 4L3.500 0L7 4z" fill="#333"/></svg>
<svg class="a" style="left:1906px;top:444.5px" width="7" height="4" viewBox="0 0 7 4" ><path d="M0 0L3.500 4L7 0z" fill="#333"/></svg>
<div style="left:1218px;top:455px;width:701px;height:20px;background:#f2f2f2;"></div>
<div style="left:1238px;top:456px;width:228px;height:18px;background:#cbcbcb;"></div>
<svg class="a" style="left:1227.4px;top:461.8px" width="5" height="8" viewBox="0 0 5 8" ><path d="M4.500 0L0 3.750L4.500 7.500z" fill="#333"/></svg>
<svg class="a" style="left:1699.8px;top:461.8px" width="5" height="8" viewBox="0 0 5 8" ><path d="M0 0L4.500 3.750L0 7.500z" fill="#333"/></svg>
<svg class="a" style="left:1717px;top:457px" width="13" height="17" viewBox="0 0 13 17" ><path d="M0.600 0.700h6.300l4.500 4.500v10.200h-10.800z" fill="#fff" stroke="#b9a378" stroke-width="1.100" stroke-linejoin="round"/><path d="M6.900 0.700v4.500h4.500" fill="none" stroke="#b9a378" stroke-width="1.100" stroke-linejoin="round"/></svg>
<svg class="a" style="left:1739.6px;top:457.1px" width="11.44" height="15.73" viewBox="0 0 16 22" ><rect x="5.200" y="0" width="5.400" height="2" rx="0.800" fill="#a81418"/><rect x="0.100" y="1.100" width="15.900" height="2.100" rx="1" fill="#a81418"/><path d="M0.800 5.100h14.200v2.100h-0.300l-0.700 14.600h-12.200l-0.700 -14.600h-0.300z" fill="#a81418"/><path d="M4.300 8v11M8 8v11M11.700 8v11" stroke="#fff" stroke-width="1.700"/></svg>
<svg class="a" style="left:1761px;top:457px" width="13" height="17" viewBox="0 0 13 17" ><path d="M3.350 2.200v-1.450h4.600l3.450 3.450v8.100h-1.600" fill="none" stroke="#b9a378" stroke-width="1.050" stroke-linejoin="round"/><path d="M7.950 0.750v3.450h3.450" fill="none" stroke="#b9a378" stroke-width="1" stroke-linejoin="round"/><path d="M0.550 3.750h4.600l3.450 3.450v8.150h-8.050z" fill="#fff" stroke="#f2f2f2" stroke-width="2.600" stroke-linejoin="round"/><path d="M0.550 3.750h4.600l3.450 3.450v8.150h-8.050z" fill="#fff" stroke="#b9a378" stroke-width="1.050" stroke-linejoin="round"/><path d="M5.150 3.750v3.450h3.450" fill="none" stroke="#b9a378" stroke-width="1" stroke-linejoin="round"/></svg>
<svg class="a" style="left:1783px;top:457px" width="13" height="17" viewBox="0 0 13 17" ><rect x="0.300" y="0.200" width="8.400" height="11.400" fill="#9e9e9e"/><rect x="2.800" y="0.300" width="3.400" height="1.900" rx="0.500" fill="#b2b2b2"/><path d="M3.100 5.500h6.100l2.550 2.550v7.850h-8.650z" fill="#a3a3a3" stroke="#b0b0b0" stroke-width="0.500"/><path d="M9.200 5.500v2.550h2.550z" fill="#8f8f8f"/></svg>
<svg class="a" style="left:1804px;top:456px" width="16" height="17" viewBox="0 0 16 17" ><path d="M0.200 8.550L8.900 0.900V4.900H14.750V12.600H8.900V16.200Z" fill="#a7a7a7" stroke="#999" stroke-width="0.600"/></svg>
<svg class="a" style="left:1828px;top:456px" width="16" height="17" viewBox="0 0 16 17" ><path d="M14.800 8.550L6.700 0.900V4.400H0.200V12.600H6.700V16.200Z" fill="#a7a7a7" stroke="#999" stroke-width="0.600"/></svg>
<svg class="a" style="left:1852px;top:457px" width="15" height="16" viewBox="0 0 15 16" ><defs><linearGradient id="ga" x1="0" x2="1"><stop offset="0.350" stop-color="#fff"/><stop offset="0.800" stop-color="#8a8a8a"/></linearGradient></defs><path d="M7.500 0.600L14.400 8.300H10.600V14.400H4.500V8.300H0.600Z" fill="url(#ga)" stroke="#3a3a3a" stroke-width="1"/></svg>
<svg class="a" style="left:1876px;top:457px" width="15" height="16" viewBox="0 0 15 16" ><path d="M7.500 14.800L0.500 6.600H4V0.500H11V6.600H14.500Z" fill="url(#ga)" stroke="#3a3a3a" stroke-width="1"/></svg>
<div style="left:1899px;top:455px;width:20px;height:20px;background:linear-gradient(90deg,#e6e6e6,#f8f8f8 40%);"></div>
<div class="t" style="left:1906px;top:458px;font-size:10px;font-weight:bold;color:#111;">Σ</div>
<div class="st" style="left:1218px;top:477px;width:66px;height:31px;background:#84b800;"><b>Bauteil</b></div>
<div class="st" style="left:1285px;top:477px;width:95px;height:31px;background:#a6a6a6;"><b>Baugruppen</b></div>
<div class="st" style="left:1381px;top:477px;width:84px;height:31px;background:#a6a6a6;"><b>Sonstiges</b></div>
<div class="st" style="left:1466px;top:477px;width:51px;height:31px;background:#a6a6a6;"><b>Text</b></div>
<div class="st" style="left:1518px;top:477px;width:90px;height:31px;background:#a6a6a6;"><b>Kalkulation</b></div>
<div style="left:1609px;top:507px;width:311px;height:1px;background:#b9dc7a;"></div>
<div class="lb bl" style="left:1167px;top:522px;width:160px;letter-spacing:0.092px;">Produkt</div>
<div class="in" style="left:1330px;top:518px;width:100px;height:20px;letter-spacing:0.326px;">100969</div>
<div class="lb" style="left:1321px;top:522px;width:160px;letter-spacing:0.260px;">Ebene</div>
<div class="ro" style="left:1484px;top:518px;width:49px;height:20px;letter-spacing:0.326px;">0</div>
<div class="lb" style="left:1424px;top:522px;width:160px;letter-spacing:0.107px;">Pos</div>
<div class="in cor" style="left:1587px;top:518px;width:49px;height:20px;text-align:right;padding-right:3px;letter-spacing:0.326px;">0</div>
<div class="lb" style="left:1167px;top:545px;width:160px;letter-spacing:0.245px;word-spacing:-0.579px;">Bezeichnung 1</div>
<div class="in" style="left:1330px;top:541px;width:306px;height:20px;letter-spacing:0.181px;word-spacing:-0.515px;">Straßenbesen Manuel</div>
<div class="lb" style="left:1167px;top:568px;width:160px;letter-spacing:0.245px;word-spacing:-0.579px;">Bezeichnung 2</div>
<div class="in" style="left:1330px;top:564px;width:306px;height:20px;"></div>
<div class="lb" style="left:1167px;top:591px;width:160px;letter-spacing:0.060px;word-spacing:-0.394px;">Einz.-/Ges. Menge</div>
<div class="in cor" style="left:1330px;top:587px;width:100px;height:20px;text-align:right;padding-right:3px;letter-spacing:0.326px;">1</div>
<div class="ro" style="left:1433px;top:587px;width:100px;height:20px;letter-spacing:0.326px;">1</div>
<div class="lb bl" style="left:1424px;top:591px;width:160px;letter-spacing:0.187px;">Einheit</div>
<div class="in cor" style="left:1587px;top:587px;width:49px;height:20px;letter-spacing:-0.084px;">Stck</div>
<div class="lb" style="left:1167px;top:614px;width:160px;letter-spacing:0.173px;word-spacing:-0.507px;">Lager Ab-/Zugang</div>
<div class="ro" style="left:1330px;top:610px;width:100px;height:20px;"></div>
<div class="ro" style="left:1433px;top:610px;width:100px;height:20px;"></div>
<div class="lb bl" style="left:1167px;top:660px;width:160px;letter-spacing:0.145px;">Lieferant</div>
<div class="in" style="left:1330px;top:656px;width:306px;height:20px;letter-spacing:0.104px;word-spacing:-0.438px;">77044 - INTEGRIS - Produktion</div>
<div class="lb bl" style="left:1167px;top:683px;width:160px;letter-spacing:0.262px;">Lager</div>
<div class="in" style="left:1330px;top:679px;width:306px;height:20px;"></div>
<div class="lb bl" style="left:1167px;top:706px;width:160px;letter-spacing:0.196px;">Lagerplatz</div>
<div class="in" style="left:1330px;top:702px;width:306px;height:20px;"></div>
<div class="lb bl" style="left:1167px;top:752px;width:160px;letter-spacing:0.218px;">Variantengruppe</div>
<div class="in" style="left:1330px;top:748px;width:306px;height:20px;"></div>
<div class="lb" style="left:1167px;top:775px;width:160px;letter-spacing:0.019px;">Variant.-Attrib.</div>
<div class="in" style="left:1330px;top:771px;width:306px;height:20px;"></div>
<div class="lb" style="left:1167px;top:798px;width:160px;letter-spacing:0.086px;">Variant.-Kennz.</div>
<div class="in" style="left:1330px;top:794px;width:100px;height:20px;"></div>
<svg class="a" style="left:1418px;top:802px" width="5" height="3" viewBox="0 0 5 3" shape-rendering="crispEdges"><path d="M0 0h5v1h-5zM1 1h3v1h-3zM2 2h1v1h-1z" fill="#000"/></svg>
<div class="t g" style="left:5px;top:995px;letter-spacing:0.128px;word-spacing:-0.462px;">M1001599 / Startmandant / integris / de</div>
<div class="t g" style="right:5px;top:995px;letter-spacing:0.076px;word-spacing:-0.410px;">Fertigungsstruktur: Bemerkung [S10 Z8/18]</div>
</body></html>
